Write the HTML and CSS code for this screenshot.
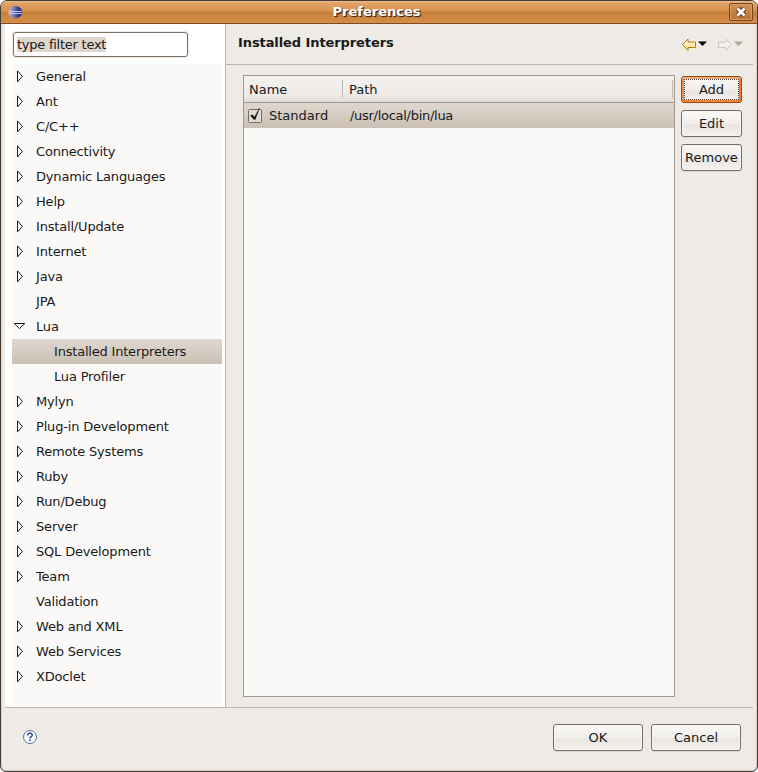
FILE: index.html
```
<!DOCTYPE html>
<html lang="en">
<head>
<meta charset="utf-8">
<title>Preferences</title>
<link rel="stylesheet" href="styles.css">
</head>
<body>
<svg class="defs" width="0" height="0">
  <symbol id="closed" viewBox="0 0 14 14"><path d="M5.5 .9v11L10.4 6.4z" fill="#fff" stroke="#1a1a1a"/></symbol>
  <symbol id="open" viewBox="0 0 14 14"><path d="M2.2 3.5h10.6L7.5 8.6z" fill="#fff" stroke="#1a1a1a"/></symbol>
</svg>
<div class="window">
  <header class="titlebar">
    <svg class="app-icon" width="15" height="14" viewBox="0 0 15 14">
      <defs><linearGradient id="ball"><stop offset="0" stop-color="#e0b0b8"/><stop offset=".35" stop-color="#8284bb"/><stop offset=".7" stop-color="#3c3c90"/><stop offset="1" stop-color="#2c2c80"/></linearGradient></defs>
      <ellipse cx="7.3" cy="7.2" rx="7" ry="6.2" fill="url(#ball)"/>
      <path d="M1 6.5h13M1 8.5h13" stroke="#b9d4ee" stroke-width=".9"/>
    </svg>
    <h1>Preferences</h1>
    <button class="close" aria-label="Close"><svg width="12" height="12" viewBox="0 0 12 12"><path d="M2.5 2.5l7 7M9.5 2.5l-7 7" stroke="#6d3a13" stroke-width="4.8"/><path d="M2.5 2.5l7 7M9.5 2.5l-7 7" stroke="#fff" stroke-width="2.8"/></svg></button>
  </header>
  <main class="content">
    <aside class="sidebar">
      <div class="filter"><span>type filter text</span></div>
      <ul class="tree">
        <li><svg><use href="#closed"/></svg>General</li>
        <li><svg><use href="#closed"/></svg>Ant</li>
        <li><svg><use href="#closed"/></svg>C/C++</li>
        <li><svg><use href="#closed"/></svg>Connectivity</li>
        <li><svg><use href="#closed"/></svg>Dynamic Languages</li>
        <li><svg><use href="#closed"/></svg>Help</li>
        <li><svg><use href="#closed"/></svg>Install/Update</li>
        <li><svg><use href="#closed"/></svg>Internet</li>
        <li><svg><use href="#closed"/></svg>Java</li>
        <li class="leaf">JPA</li>
        <li><svg><use href="#open"/></svg>Lua</li>
        <li class="child selected">Installed Interpreters</li>
        <li class="child">Lua Profiler</li>
        <li><svg><use href="#closed"/></svg>Mylyn</li>
        <li><svg><use href="#closed"/></svg>Plug-in Development</li>
        <li><svg><use href="#closed"/></svg>Remote Systems</li>
        <li><svg><use href="#closed"/></svg>Ruby</li>
        <li><svg><use href="#closed"/></svg>Run/Debug</li>
        <li><svg><use href="#closed"/></svg>Server</li>
        <li><svg><use href="#closed"/></svg>SQL Development</li>
        <li><svg><use href="#closed"/></svg>Team</li>
        <li class="leaf">Validation</li>
        <li><svg><use href="#closed"/></svg>Web and XML</li>
        <li><svg><use href="#closed"/></svg>Web Services</li>
        <li><svg><use href="#closed"/></svg>XDoclet</li>
      </ul>
    </aside>
    <section class="page">
      <div class="page-head">
        <h2>Installed Interpreters</h2>
        <svg class="nav" width="64" height="16" viewBox="0 0 64 16">
          <defs><linearGradient id="gold" x2="0" y2="1"><stop offset="0" stop-color="#fffdf0"/><stop offset="1" stop-color="#ffdf75"/></linearGradient></defs>
          <path d="M1.5 7.5L7 2v3h7.5v5.5H7v3z" fill="url(#gold)" stroke="#b57b12"/>
          <path d="M17 4.5h9l-4.5 4.5z" fill="#000"/>
          <path d="M50.5 7.5L45 2v3h-7.5v5.5H45v3z" fill="#f2efeb" stroke="#cbc8c3"/>
          <path d="M53 4.5h9l-4.5 4.5z" fill="#b5a798"/>
        </svg>
      </div>
      <div class="page-body">
        <div class="table">
          <div class="thead"><span class="name">Name</span><span class="path">Path</span></div>
          <div class="row">
            <svg width="15" height="17" viewBox="0 0 15 17"><rect x=".5" y="3.5" width="13" height="13" rx="1" fill="#e2dbd4" stroke="#746a60"/><path d="M2.5 9.8l2-1 2 2.4L11.5 2 7.2 13.6H6z" fill="#111" stroke="#111" stroke-width=".4"/></svg>
            <span class="name">Standard</span><span class="path">/usr/local/bin/lua</span>
          </div>
        </div>
        <div class="actions">
          <button class="btn focused">Add</button>
          <button class="btn">Edit</button>
          <button class="btn">Remove</button>
        </div>
      </div>
    </section>
  </main>
  <footer class="footer">
    <svg class="help" width="16" height="16" viewBox="0 0 16 16"><circle cx="8" cy="8" r="6.5" fill="#fafcff" stroke="#57739c"/><path d="M5.7 6.4C5.7 3.3 10.4 3.6 10.2 6.2 10.1 7.7 8 7.8 8 9.4" fill="none" stroke="#405b8c" stroke-width="1.7"/><path d="M7.1 10.5h1.8V12H7.1z" fill="#405b8c"/></svg>
    <button class="btn">OK</button>
    <button class="btn">Cancel</button>
  </footer>
</div>
</body>
</html>
```
FILE: styles.css
```
* { box-sizing: border-box; }
body { margin: 0; background: #fff; color: #1a1a1a; font: 13px/25px "DejaVu Sans", sans-serif; }
h1, h2, ul { margin: 0; padding: 0; }
.defs { position: absolute; }
.window {
  width: 758px; height: 772px; display: flex; flex-direction: column;
  background: #eeebe7; border: 1px solid #443a36; border-radius: 7px 7px 6px 6px;
  overflow: hidden; box-shadow: inset -1px -1px #d8cfc7, inset 1px 0 #d8cfc7;
}
.titlebar {
  height: 23px; flex: none; display: flex; align-items: center; padding: 0 4px 0 7px;
  background: linear-gradient(#f0bd8c 0, #e2a468 2px, #d8924f 10px, #c67f38 11px, #d58e4a 22px);
  border-bottom: 1px solid #7e4a1e;
}
.titlebar h1 {
  flex: 1; text-align: center; color: #fff; font-size: 13px; line-height: 22px; padding-left: 1px;
  text-shadow: 1px 1px 1px #3c2a1c, 1px 1px #6a4526;
}
.close {
  width: 24px; height: 18px; padding: 0; display: flex; align-items: center; justify-content: center;
  border: 1px solid #74451d; border-radius: 2px; background: linear-gradient(#d0925a, #b87432);
  box-shadow: inset 0 0 0 1px #d89c64;
}
.content { height: 684px; flex: none; margin: 0 4px; display: flex; border-bottom: 1px solid #bab7b3; }
.sidebar { width: 221px; flex: none; background: #fff; border-right: 1px solid #bab7b3; padding: 8px 3px 1px 7px; }
.filter {
  width: 175px; height: 25px; margin-left: 1px; padding: 0 3px; display: flex; align-items: center;
  border: 1px solid #7c6f64; border-radius: 3px; box-shadow: 0 0 0 1px #eeebe7;
}
.filter span { background: #dfd6ce; line-height: 15px; letter-spacing: -.25px; }
.tree { list-style: none; margin-top: 7px; height: 642px; background: #faf9f7; letter-spacing: -.18px; }
.tree li { height: 25px; display: flex; align-items: center; white-space: nowrap; }
.tree svg { width: 14px; height: 14px; margin-right: 10px; }
.tree .leaf { padding-left: 24px; }
.tree .child { padding-left: 42px; }
.tree .selected { letter-spacing: -.2px; }
.selected, .row { background: linear-gradient(#dfd7cf, #ccc0b5); }
.page { flex: 1; display: flex; flex-direction: column; }
.page-head { height: 41px; display: flex; justify-content: space-between; border-bottom: 1px solid #bab7b3; padding: 6px 8px 0 12px; }
.page-head h2 { font-size: 13px; line-height: 25px; letter-spacing: -.09px; }
.nav { margin-top: 7px; }
.page-body { display: flex; gap: 6px; padding: 10px 0 0 17px; }
.table { width: 432px; height: 622px; border: 1px solid #a4978b; background: #faf9f7; }
.thead { height: 27px; display: flex; padding: 4px 0 4px 5px; line-height: 19px; border-bottom: 1px solid #a4978b; background: linear-gradient(#f3f1ee, #eeebe7 75%, #dfdbd6); }
.thead .name { width: 94px; border-right: 1px solid #bdb8b3; }
.thead .path { flex: 1; padding-left: 6px; border-right: 1px solid #bdb8b3; margin-right: 1px; }
.row { height: 25px; display: flex; align-items: center; padding-left: 4px; }
.row svg { margin-top: -3px; }
.row .name { width: 81px; padding-left: 6px; }
.row .path { padding-left: 6px; letter-spacing: -.28px; }
.actions { display: flex; flex-direction: column; gap: 7px; padding-top: 1px; }
.btn {
  width: 61px; height: 27px; padding: 0; border: 1px solid #786d63; border-radius: 3px;
  font: inherit; line-height: 23px; color: #1a1a1a;
  background: linear-gradient(#faf9f8, #f1eeeb 50%, #e9e5e1 55%, #f3f1ef);
  box-shadow: inset 0 0 0 1px #f8f6f4, 0 1px #e1dad4;
}
.focused {
  border-color: #9b4b1b; outline: 1px dotted #444; outline-offset: -4px;
  box-shadow: inset 0 2px #f7ab74, inset 2px 0 #f18a45, inset -2px 0 #f57520, inset 0 -2px #f5822e;
}
.footer { flex: 1; display: flex; gap: 8px; padding: 16px 16px 0 21px; }
.footer .help { margin: 5px auto 0 0; }
.footer .btn { width: 90px; }
```
